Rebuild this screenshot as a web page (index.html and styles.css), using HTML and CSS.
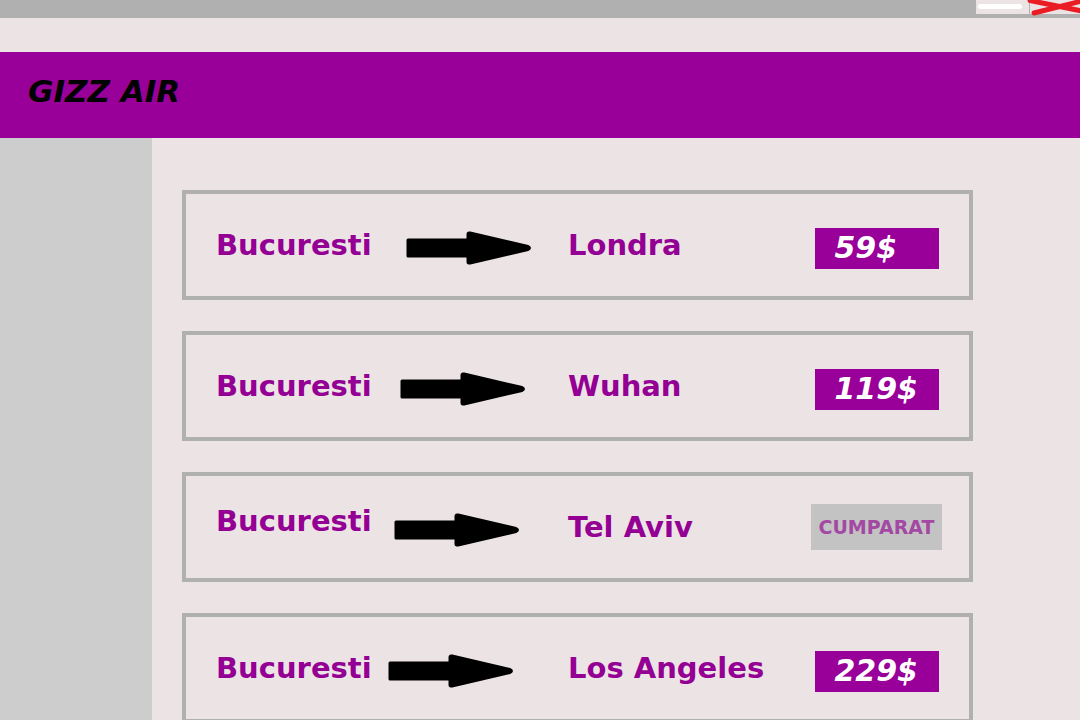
FILE: index.html
```html
<!DOCTYPE html>
<html lang="ro">
<head>
<meta charset="utf-8">
<meta name="viewport" content="width=device-width, initial-scale=1">
<title>GIZZ AIR</title>
<link rel="stylesheet" href="styles.css">
</head>
<body>
<svg class="defs" aria-hidden="true">
  <symbol id="arrow" viewBox="0 0 126 34">
    <path d="M2 9H62V3Q62 1.500 64 2L122 15.500Q125 17 122 18.500L64 32Q62 32.500 62 31V25H2Z" fill="#000" stroke="#000" stroke-width="3" stroke-linejoin="round"/>
  </symbol>
</svg>
<div class="titlebar">
  <button class="window-button" type="button" aria-label="Minimizare">
    <svg width="53" height="14" viewBox="0 0 53 14"><path d="M4.500 6.500H43.500" stroke="#fff" stroke-width="5" stroke-linecap="round"/></svg>
  </button>
  <button class="window-button" type="button" aria-label="Inchidere">
    <svg class="close-icon" width="50" height="14" viewBox="0 0 50 14"><path d="M0 0.500L52 11M4 13L52 1" stroke="#ea1c24" stroke-width="5" stroke-linecap="round"/></svg>
  </button>
</div>
<header class="brand"><h1 class="brand-name">GIZZ AIR</h1></header>
<div class="layout">
  <aside class="sidebar"></aside>
  <main class="flights">
    <article class="flight">
      <span class="city">Bucuresti</span>
      <svg class="arrow" aria-hidden="true"><use href="#arrow"/></svg>
      <span class="city">Londra</span>
      <button class="price" type="button">59$</button>
    </article>
    <article class="flight">
      <span class="city">Bucuresti</span>
      <svg class="arrow" aria-hidden="true"><use href="#arrow"/></svg>
      <span class="city">Wuhan</span>
      <button class="price" type="button">119$</button>
    </article>
    <article class="flight flight-bought">
      <span class="city">Bucuresti</span>
      <svg class="arrow" aria-hidden="true"><use href="#arrow"/></svg>
      <span class="city">Tel Aviv</span>
      <button class="bought" type="button" disabled>CUMPARAT</button>
    </article>
    <article class="flight">
      <span class="city">Bucuresti</span>
      <svg class="arrow" aria-hidden="true"><use href="#arrow"/></svg>
      <span class="city">Los Angeles</span>
      <button class="price" type="button">229$</button>
    </article>
  </main>
</div>
</body>
</html>
```
FILE: styles.css
```css
* {
  box-sizing: border-box;
}

body {
  margin: 0;
  min-height: 100vh;
  display: flex;
  flex-direction: column;
  background: #ece4e4;
  font-family: "DejaVu Sans", Verdana, sans-serif;
  font-weight: bold;
}

button {
  margin: 0;
  padding: 0;
  border: 0;
  font: inherit;
}

.defs {
  position: absolute;
  width: 0;
  height: 0;
}

.titlebar {
  display: flex;
  justify-content: flex-end;
  align-items: flex-start;
  gap: 1px;
  height: 18px;
  margin-bottom: 34px;
  overflow: hidden;
  background: #b0b0b0;
}

.window-button {
  display: flex;
  background: #ece4e4;
}

.close-icon {
  overflow: visible;
}

.brand {
  padding: 21px 28px 29px;
  background: #990099;
}

.brand-name {
  margin: 0;
  color: #000;
  font-size: 31px;
  line-height: 36px;
  font-style: italic;
}

.layout {
  flex: 1;
  display: flex;
}

.sidebar {
  width: 152px;
  flex-shrink: 0;
  background: #cdcdcd;
}

.flights {
  flex: 1;
  display: flex;
  flex-direction: column;
  gap: 31px;
  padding: 52px 107px 32px 30px;
}

.flight {
  display: grid;
  grid-template-columns: 172px 180px 1fr 131px;
  align-items: center;
  min-height: 110px;
  padding: 0 27px 0 30px;
  border: 4px solid #b0b0b0;
}

.city {
  color: #940094;
  font-size: 29px;
  line-height: 36px;
  white-space: nowrap;
}

.flight-bought .city:first-child {
  padding-bottom: 12px;
}

/* The arrows step toward the departure city from row to row. */
.arrow {
  width: 126px;
  height: 34px;
  margin-top: 6px;
}

.flight:nth-child(1) .arrow {
  margin-left: 18px;
}

.flight:nth-child(2) .arrow {
  margin-left: 12px;
}

.flight:nth-child(3) .arrow {
  margin-left: 6px;
}

.price {
  justify-self: center;
  width: 124px;
  margin-top: 6px;
  padding: 2px 20px 3px;
  background: #990099;
  color: #fff;
  font-size: 30px;
  line-height: 36px;
  font-style: italic;
  text-align: left;
}

.bought {
  padding: 5px 0;
  background: #c3c3c3;
  color: #a349a4;
  font-size: 19px;
  line-height: 36px;
}
```
